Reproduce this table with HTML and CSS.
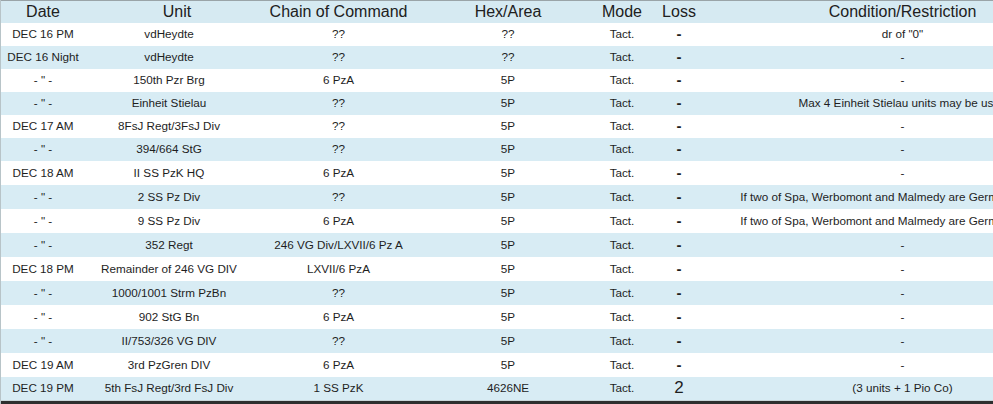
FILE: index.html
```html
<!DOCTYPE html>
<html>
<head>
<meta charset="utf-8">
<link rel="stylesheet" href="styles.css">
</head>
<body>
<div class="frame">
<table class="oob">
  <colgroup>
    <col class="c-date"><col class="c-unit"><col class="c-chain"><col class="c-hex"><col class="c-mode"><col class="c-loss"><col class="c-cond">
  </colgroup>
  <thead>
    <tr><th>Date</th><th class="h-unit">Unit</th><th>Chain of Command</th><th>Hex/Area</th><th>Mode</th><th>Loss</th><th>Condition/Restriction</th></tr>
  </thead>
  <tbody>
    <tr class="short"><td>DEC 16 PM</td><td>vdHeydte</td><td>??</td><td>??</td><td>Tact.</td><td class="loss">-</td><td>dr of "0"</td></tr>
    <tr class="short"><td>DEC 16 Night</td><td>vdHeydte</td><td>??</td><td>??</td><td>Tact.</td><td class="loss">-</td><td>-</td></tr>
    <tr class="short"><td>- " -</td><td>150th Pzr Brg</td><td>6 PzA</td><td>5P</td><td>Tact.</td><td class="loss">-</td><td>-</td></tr>
    <tr class="short"><td>- " -</td><td>Einheit Stielau</td><td>??</td><td>5P</td><td>Tact.</td><td class="loss">-</td><td>Max 4 Einheit Stielau units may be used</td></tr>
    <tr class="short"><td>DEC 17 AM</td><td>8FsJ Regt/3FsJ Div</td><td>??</td><td>5P</td><td>Tact.</td><td class="loss">-</td><td>-</td></tr>
    <tr class="short"><td>- " -</td><td>394/664 StG</td><td>??</td><td>5P</td><td>Tact.</td><td class="loss">-</td><td>-</td></tr>
    <tr><td>DEC 18 AM</td><td>II SS PzK HQ</td><td>6 PzA</td><td>5P</td><td>Tact.</td><td class="loss">-</td><td>-</td></tr>
    <tr><td>- " -</td><td>2 SS Pz Div</td><td>??</td><td>5P</td><td>Tact.</td><td class="loss">-</td><td>If two of Spa, Werbomont and Malmedy are German controlled</td></tr>
    <tr><td>- " -</td><td>9 SS Pz Div</td><td>6 PzA</td><td>5P</td><td>Tact.</td><td class="loss">-</td><td>If two of Spa, Werbomont and Malmedy are German controlled</td></tr>
    <tr><td>- " -</td><td>352 Regt</td><td>246 VG Div/LXVII/6 Pz A</td><td>5P</td><td>Tact.</td><td class="loss">-</td><td>-</td></tr>
    <tr><td>DEC 18 PM</td><td>Remainder of 246 VG DIV</td><td>LXVII/6 PzA</td><td>5P</td><td>Tact.</td><td class="loss">-</td><td>-</td></tr>
    <tr><td>- " -</td><td>1000/1001 Strm PzBn</td><td>??</td><td>5P</td><td>Tact.</td><td class="loss">-</td><td>-</td></tr>
    <tr><td>- " -</td><td>902 StG Bn</td><td>6 PzA</td><td>5P</td><td>Tact.</td><td class="loss">-</td><td>-</td></tr>
    <tr><td>- " -</td><td>II/753/326 VG DIV</td><td>??</td><td>5P</td><td>Tact.</td><td class="loss">-</td><td>-</td></tr>
    <tr><td>DEC 19 AM</td><td>3rd PzGren DIV</td><td>6 PzA</td><td>5P</td><td>Tact.</td><td class="loss">-</td><td>-</td></tr>
    <tr><td>DEC 19 PM</td><td>5th FsJ Regt/3rd FsJ Div</td><td>1 SS PzK</td><td>4626NE</td><td>Tact.</td><td class="loss big">2</td><td>(3 units + 1 Pio Co)</td></tr>
  </tbody>
</table>
</div>
</body>
</html>
```
FILE: styles.css
```css
html, body {
  margin: 0;
  padding: 0;
  background: #ffffff;
  overflow: hidden;
}
.frame {
  width: 993px;
  height: 404px;
  overflow: hidden;
  border-left: 1px solid #b8c4c8;
  box-sizing: border-box;
  position: relative;
}
.oob {
  table-layout: fixed;
  border-collapse: collapse;
  width: 1100px;
  margin-left: -1px;
  font-family: "Liberation Sans", Arial, sans-serif;
  color: #1e1e1e;
  border-bottom: 1px solid #c9d6da;
}
.c-date { width: 86px; }
.c-unit { width: 166px; }
.c-chain { width: 173px; }
.c-hex { width: 166px; }
.c-mode { width: 62px; }
.c-loss { width: 52px; }
.c-cond { width: 395px; }
.oob thead tr {
  background: #d6eaf2;
  height: 22px;
  border-top: 1px solid #9aa4a8;
}
.oob th {
  font-weight: normal;
  font-size: 16px;
  padding: 0;
  line-height: 20px;
  text-align: center;
  color: #202020;
  white-space: nowrap;
}
.oob th.h-unit { padding-left: 16px; }
.oob tbody tr { height: 24px; }
.oob tbody tr.short { height: 23px; }
.oob tbody tr:nth-child(even) { background: #d8ecf4; }
.oob td {
  font-size: 11.7px;
  padding: 0;
  text-align: center;
  white-space: nowrap;
  line-height: 14px;
}
.oob td.loss {
  font-size: 15px;
  font-weight: bold;
}
.oob td.big {
  font-size: 17px;
  font-weight: normal;
}
.frame::after {
  content: "";
  position: absolute;
  left: 0;
  right: 0;
  bottom: 0;
  height: 3px;
  background: #2e2e2e;
}
```
